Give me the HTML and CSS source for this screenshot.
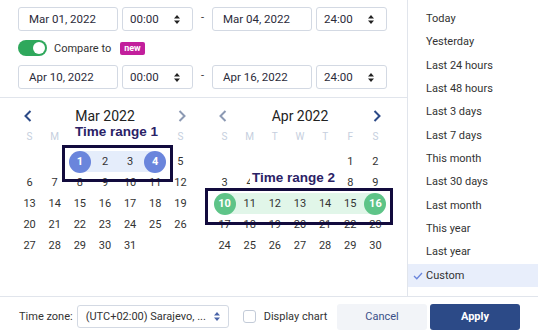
FILE: index.html
```html
<!DOCTYPE html>
<html lang="en">
<head>
    <meta charset="UTF-8">
    <title>Date range picker</title>
    <link rel="stylesheet" href="styles.css">
</head>
<body>
    <div class="picker">
        <div class="picker-body">
            <div class="left">
                <div class="ranges">
                    <div class="range-row">
                        <div class="field date">Mar 01, 2022</div>
                        <div class="field time">00:00
                            <svg width="6" height="11" viewBox="0 0 6 11"><path d="M0 4.5L3 1L6 4.5ZM0 6.5L3 10L6 6.5Z" fill="#222"/></svg>
                        </div>
                        <span class="dash">-</span>
                        <div class="field date">Mar 04, 2022</div>
                        <div class="field time">24:00
                            <svg width="6" height="11" viewBox="0 0 6 11"><path d="M0 4.5L3 1L6 4.5ZM0 6.5L3 10L6 6.5Z" fill="#222"/></svg>
                        </div>
                    </div>
                    <div class="compare">
                        <span class="toggle"><span class="knob"></span></span>
                        <span class="compare-label">Compare to</span>
                        <span class="badge">new</span>
                    </div>
                    <div class="range-row">
                        <div class="field date">Apr 10, 2022</div>
                        <div class="field time">00:00
                            <svg width="6" height="11" viewBox="0 0 6 11"><path d="M0 4.5L3 1L6 4.5ZM0 6.5L3 10L6 6.5Z" fill="#222"/></svg>
                        </div>
                        <span class="dash">-</span>
                        <div class="field date">Apr 16, 2022</div>
                        <div class="field time">24:00
                            <svg width="6" height="11" viewBox="0 0 6 11"><path d="M0 4.5L3 1L6 4.5ZM0 6.5L3 10L6 6.5Z" fill="#222"/></svg>
                        </div>
                    </div>
                </div>

                <div class="calendars">
                    <div class="month">
                        <div class="month-head">
                            <svg class="nav" width="8" height="12" viewBox="0 0 8 12"><polyline points="6.5,1 1.5,6 6.5,11" fill="none" stroke="#2c4a87" stroke-width="2"/></svg>
                            <span class="month-name">Mar 2022</span>
                            <svg class="nav" width="8" height="12" viewBox="0 0 8 12"><polyline points="1.5,1 6.5,6 1.5,11" fill="none" stroke="#8c99b3" stroke-width="2"/></svg>
                        </div>
                        <div class="weekdays">
                            <span>S</span><span>M</span><span>T</span><span>W</span><span>T</span><span>F</span><span>S</span>
                        </div>
                        <div class="days">
                            <span></span><span></span>
                            <span class="day start blue"><b>1</b></span>
                            <span class="day mid blue">2</span>
                            <span class="day mid blue">3</span>
                            <span class="day end blue"><b>4</b></span>
                            <span class="day">5</span>
                            <span class="day">6</span><span class="day">7</span><span class="day">8</span><span class="day">9</span><span class="day">10</span><span class="day">11</span><span class="day">12</span>
                            <span class="day">13</span><span class="day">14</span><span class="day">15</span><span class="day">16</span><span class="day">17</span><span class="day">18</span><span class="day">19</span>
                            <span class="day">20</span><span class="day">21</span><span class="day">22</span><span class="day">23</span><span class="day">24</span><span class="day">25</span><span class="day">26</span>
                            <span class="day">27</span><span class="day">28</span><span class="day">29</span><span class="day">30</span><span class="day">31</span>
                        </div>
                    </div>
                    <div class="month">
                        <div class="month-head">
                            <svg class="nav" width="8" height="12" viewBox="0 0 8 12"><polyline points="6.5,1 1.5,6 6.5,11" fill="none" stroke="#8c99b3" stroke-width="2"/></svg>
                            <span class="month-name">Apr 2022</span>
                            <svg class="nav" width="8" height="12" viewBox="0 0 8 12"><polyline points="1.5,1 6.5,6 1.5,11" fill="none" stroke="#2c4a87" stroke-width="2"/></svg>
                        </div>
                        <div class="weekdays">
                            <span>S</span><span>M</span><span>T</span><span>W</span><span>T</span><span>F</span><span>S</span>
                        </div>
                        <div class="days">
                            <span></span><span></span><span></span><span></span><span></span>
                            <span class="day">1</span><span class="day">2</span>
                            <span class="day">3</span><span class="day">4</span><span class="day">5</span><span class="day">6</span><span class="day">7</span><span class="day">8</span><span class="day">9</span>
                            <span class="day start green"><b>10</b></span>
                            <span class="day mid green">11</span>
                            <span class="day mid green">12</span>
                            <span class="day mid green">13</span>
                            <span class="day mid green">14</span>
                            <span class="day mid green">15</span>
                            <span class="day end green"><b>16</b></span>
                            <span class="day">17</span><span class="day">18</span><span class="day">19</span><span class="day">20</span><span class="day">21</span><span class="day">22</span><span class="day">23</span>
                            <span class="day">24</span><span class="day">25</span><span class="day">26</span><span class="day">27</span><span class="day">28</span><span class="day">29</span><span class="day">30</span>
                        </div>
                    </div>

                    <div class="annot-box box-1"></div>
                    <div class="annot-label label-1">Time range 1</div>
                    <div class="annot-box box-2"></div>
                    <div class="annot-label label-2">Time range 2</div>
                </div>
            </div>

            <ul class="presets">
                <li>Today</li>
                <li>Yesterday</li>
                <li>Last 24 hours</li>
                <li>Last 48 hours</li>
                <li>Last 3 days</li>
                <li>Last 7 days</li>
                <li>This month</li>
                <li>Last 30 days</li>
                <li>Last month</li>
                <li>This year</li>
                <li>Last year</li>
                <li class="active">
                    <svg class="check" width="10" height="8" viewBox="0 0 10 8"><polyline points="1,4 3.8,6.8 9,1" fill="none" stroke="#6a85dc" stroke-width="1.3"/></svg>
                    Custom
                </li>
            </ul>
        </div>

        <div class="footer">
            <span class="tz-label">Time zone:</span>
            <div class="select">(UTC+02:00) Sarajevo, ...
                <svg width="6" height="11" viewBox="0 0 6 11"><path d="M0 4.5L3 1L6 4.5ZM0 6.5L3 10L6 6.5Z" fill="#4a64a8"/></svg>
            </div>
            <span class="checkbox"></span>
            <span class="chart-label">Display chart</span>
            <button class="btn cancel">Cancel</button>
            <button class="btn apply">Apply</button>
        </div>
    </div>
</body>
</html>
```
FILE: styles.css
```css
body {
    margin: 0;
    font-family: 'Roboto', 'Noto Sans', sans-serif;
    font-size: 11px;
    color: #333;
    background-color: #fff;
}

.picker {
    width: 538px;
    height: 336px;
    display: flex;
    flex-direction: column;
}

.picker-body {
    display: flex;
    height: 296px;
    border-bottom: 1px solid #e1e5ec;
}

.left {
    width: 407px;
    border-right: 1px solid #e1e5ec;
}

/* inputs */
.ranges {
    padding: 7px 0 8px 18px;
    border-bottom: 1px solid #e1e5ec;
}

.range-row {
    display: flex;
    align-items: center;
}

.field {
    box-sizing: border-box;
    height: 24px;
    border: 1px solid #d3d9e3;
    border-radius: 3px;
    display: flex;
    align-items: center;
    font-size: 11.5px;
    color: #2b2b3a;
}

.field.date {
    width: 100px;
    padding-left: 10px;
}

.field.time {
    width: 71px;
    margin-left: 4px;
    padding: 0 12px 0 7px;
    justify-content: space-between;
}

.dash {
    width: 19px;
    text-align: center;
    font-size: 11px;
    margin-top: -4px;
}

.compare {
    display: flex;
    align-items: center;
    height: 16px;
    margin: 9px 0;
}

.toggle {
    width: 29px;
    height: 16px;
    border-radius: 8px;
    background-color: #2fa85c;
    display: flex;
    align-items: center;
    justify-content: flex-end;
    padding-right: 2px;
    box-sizing: border-box;
}

.knob {
    width: 12px;
    height: 12px;
    border-radius: 50%;
    background-color: #fff;
}

.compare-label {
    margin-left: 7px;
    font-size: 11px;
}

.badge {
    margin-left: 9px;
    background-color: #c21f9c;
    color: #fff;
    font-size: 9px;
    font-weight: bold;
    padding: 1px 4px 2px;
    border-radius: 2px;
    line-height: 10px;
}

/* calendars */
.calendars {
    position: relative;
    display: flex;
    gap: 19px;
    padding: 8px 0 0 17px;
}

.month {
    width: 176px;
}

.month-head {
    height: 20px;
    display: flex;
    align-items: center;
    justify-content: space-between;
    padding: 0 7px;
}

.month-name {
    font-size: 14px;
    color: #222;
}

.weekdays, .days {
    display: grid;
    grid-template-columns: repeat(7, 1fr);
    text-align: center;
}

.weekdays {
    height: 20px;
    align-items: center;
    color: #c6cfde;
    font-size: 10px;
    margin-bottom: 5px;
}

.days {
    grid-auto-rows: 21px;
}

.day {
    display: flex;
    align-items: center;
    justify-content: center;
    font-size: 11px;
    color: #333;
}

.day b {
    width: 22px;
    height: 22px;
    border-radius: 50%;
    display: flex;
    align-items: center;
    justify-content: center;
    color: #fff;
    font-weight: bold;
}

.day.mid.blue { background-color: #e5edfb; }
.day.start.blue { background: linear-gradient(to right, transparent 50%, #e5edfb 50%); }
.day.end.blue { background: linear-gradient(to right, #e5edfb 50%, transparent 50%); }
.day.blue b { background-color: #6a85dc; }

.day.mid.green { background-color: #e1f6e9; }
.day.start.green { background: linear-gradient(to right, transparent 50%, #e1f6e9 50%); }
.day.end.green { background: linear-gradient(to right, #e1f6e9 50%, transparent 50%); }
.day.green b { background-color: #5ec488; }

/* annotations laid over the calendars */
.annot-box {
    position: absolute;
    box-sizing: border-box;
    border: 3px solid #120b3d;
}

.box-1 {
    left: 62px;
    top: 47px;
    width: 111px;
    height: 37px;
}

.box-2 {
    left: 205px;
    top: 90px;
    width: 188px;
    height: 37px;
}

.annot-label {
    position: absolute;
    background-color: #fff;
    color: #2a2266;
    font-family: 'Liberation Sans', Arial, sans-serif;
    font-size: 13.5px;
    font-weight: bold;
    line-height: 16px;
    padding: 0 2px;
}

.label-1 {
    left: 73px;
    top: 26px;
}

.label-2 {
    left: 250px;
    top: 72px;
}

/* presets */
.presets {
    list-style: none;
    margin: 0;
    padding: 7px 0 0;
    flex: 1;
}

.presets li {
    position: relative;
    height: 23.35px;
    line-height: 23.35px;
    padding-left: 18px;
    font-size: 11px;
    color: #333;
}

.presets li.active {
    background-color: #e8eefb;
}

.check {
    position: absolute;
    left: 5px;
    top: 8px;
}

/* footer */
.footer {
    flex: 1;
    display: flex;
    align-items: center;
    padding: 0 18px 0 19px;
}

.tz-label {
    font-size: 11px;
}

.select {
    box-sizing: border-box;
    width: 152px;
    height: 23px;
    margin-left: 4px;
    border: 1px solid #d3d9e3;
    border-radius: 3px;
    display: flex;
    align-items: center;
    justify-content: space-between;
    padding: 0 8px;
    font-size: 11px;
}

.checkbox {
    box-sizing: border-box;
    width: 13px;
    height: 13px;
    margin-left: 14px;
    border: 1px solid #c3cbd8;
    border-radius: 3px;
}

.chart-label {
    margin-left: 8px;
    font-size: 11px;
}

.btn {
    width: 90px;
    height: 26px;
    border: none;
    border-radius: 3px;
    font-family: 'Roboto', sans-serif;
    font-size: 11px;
}

.cancel {
    margin-left: auto;
    background-color: #f2f4f8;
    color: #3a5088;
}

.apply {
    margin-left: 3px;
    background-color: #2c4a87;
    color: #fff;
    font-weight: bold;
}
```
